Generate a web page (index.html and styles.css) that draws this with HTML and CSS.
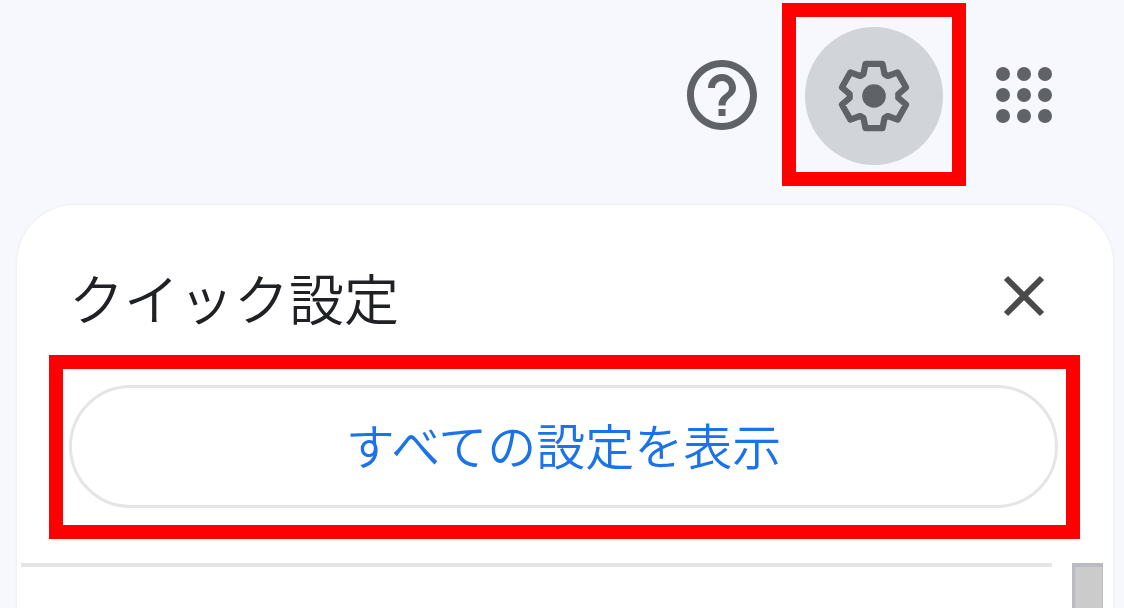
FILE: index.html
```html
<!DOCTYPE html>
<html lang="ja">
<head>
<meta charset="utf-8">
<title>クイック設定</title>
<link rel="stylesheet" href="styles.css">
</head>
<body>
<header class="toolbar">
  <button class="icon-button" type="button" aria-label="サポート">
    <svg class="icon" viewBox="0 0 24 24" aria-hidden="true"><path d="M11 18h2v-2h-2v2zm1-16C6.480 2 2 6.480 2 12s4.480 10 10 10 10-4.480 10-10S17.520 2 12 2zm0 18c-4.410 0-8-3.590-8-8s3.590-8 8-8 8 3.590 8 8-3.590 8-8 8zm0-14c-2.210 0-4 1.790-4 4h2c0-1.100.900-2 2-2s2 .900 2 2c0 2-3 1.750-3 5h2c0-2.250 3-2.500 3-5 0-2.210-1.790-4-4-4z"/></svg>
  </button>
  <div class="callout callout-gear">
    <button class="icon-button icon-button-active" type="button" aria-label="設定">
      <svg class="icon" viewBox="-128 -128 256 256" aria-hidden="true">
        <path class="gear-outline" d="M-32-67L-26-98L26-98L32-67L42-61L72-72L98-26L74-6L74 6L98 26L72 72L42 61L32 67L26 98L-26 98L-32 67L-42 61L-72 72L-98 26L-74 6L-74-6L-98-26L-72-72L-42-61Z"/>
        <circle r="36"/>
      </svg>
    </button>
  </div>
  <button class="icon-button" type="button" aria-label="アプリ">
    <svg class="icon" viewBox="0 0 24 24" aria-hidden="true">
      <circle cx="6" cy="6" r="2"/><circle cx="12" cy="6" r="2"/><circle cx="18" cy="6" r="2"/>
      <circle cx="6" cy="12" r="2"/><circle cx="12" cy="12" r="2"/><circle cx="18" cy="12" r="2"/>
      <circle cx="6" cy="18" r="2"/><circle cx="12" cy="18" r="2"/><circle cx="18" cy="18" r="2"/>
    </svg>
  </button>
</header>
<main class="panel">
  <div class="panel-head">
    <h1 class="panel-title">クイック設定</h1>
    <button class="icon-button" type="button" aria-label="閉じる">
      <svg class="icon" viewBox="0 0 84 84" aria-hidden="true"><path class="close-cross" d="M24 24L60 60M60 24L24 60"/></svg>
    </button>
  </div>
  <div class="callout callout-all">
    <button class="all-settings" type="button">すべての設定を表示</button>
  </div>
  <div class="panel-body">
    <div class="settings-list"></div>
    <div class="scrollbar"></div>
  </div>
</main>
</body>
</html>
```

FILE: styles.css
```css
* {
  box-sizing: border-box;
}

body {
  display: flex;
  flex-direction: column;
  height: 100vh;
  margin: 0;
  overflow: hidden;
  background: #f6f8fd;
  font-family: "Noto Sans CJK JP", sans-serif;
}

.toolbar {
  display: flex;
  align-items: center;
  justify-content: flex-end;
  padding: 3px 58px 19px 0;
}

.icon-button {
  display: flex;
  align-items: center;
  justify-content: center;
  padding: 0;
  border: 0;
  border-radius: 50%;
  background: none;
}

.icon-button-active {
  width: 138px;
  height: 138px;
  background: #d1d4d8;
}

.icon {
  display: block;
  width: 84px;
  height: 84px;
  fill: #5f6368;
}

.gear-outline {
  fill: none;
  stroke: #5f6368;
  stroke-width: 19;
  stroke-linejoin: round;
}

.close-cross {
  fill: none;
  stroke: #4a4a4a;
  stroke-width: 6;
}

.callout {
  border: 14px solid #ff0000;
}

.callout-gear {
  margin: 0 16px 0 18px;
  padding: 10px 9px 7px;
}

.panel {
  display: flex;
  flex: 1;
  flex-direction: column;
  margin: 0 11px 0 17px;
  border-radius: 58px 58px 0 0;
  background: #ffffff;
  box-shadow: 0 0 3px #e4e6ea;
}

.panel-head {
  display: flex;
  align-items: center;
  justify-content: space-between;
  padding: 49px 47px 17px 52px;
}

.panel-title {
  margin: 0;
  color: #202124;
  font-size: 55px;
  font-weight: 350;
  line-height: 84px;
}

.callout-all {
  margin: 0 33px 24px 32px;
  padding: 16px 8px 17px 6px;
}

.all-settings {
  display: block;
  width: 100%;
  padding: 0 0 6px;
  border: 3px solid #e5e5e5;
  border-radius: 62px;
  background: #ffffff;
  color: #1a73e8;
  font-family: inherit;
  font-size: 49px;
  font-weight: 350;
  line-height: 111px;
}

.panel-body {
  display: flex;
  flex: 1;
  gap: 20px;
  padding: 0 10px 0 4px;
}

.settings-list {
  flex: 1;
  border-top: 4px solid #e5e5e5;
}

.scrollbar {
  width: 31px;
  border: solid #b9bbc0;
  border-width: 4px 1px 0 3px;
  background: #cbcbcb;
}
```
